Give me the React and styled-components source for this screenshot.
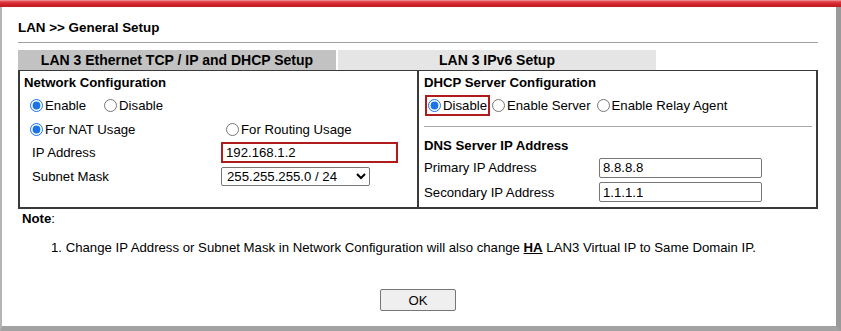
import styled, { createGlobalStyle } from "styled-components";

const GlobalStyle = createGlobalStyle`
  body {
    margin: 0;
    font-family: "Liberation Sans", Arial, sans-serif;
    font-size: 13.2px;
    color: #000;
    background: #fff;
  }
`;

const Window = styled.div`
  width: 841px;
  height: 331px;
  display: flex;
  flex-direction: column;
  box-sizing: border-box;
`;

const TopBar = styled.div`
  height: 7px;
  background: linear-gradient(#f3a0a0 0, #e04048 25%, #d0222a 60%, #c41c24 100%);
`;

const Body = styled.div`
  flex: 1;
  box-sizing: border-box;
  border-left: 2px solid #b4b4b4;
  border-right: 5px solid #9a9a9a;
  border-bottom: 5px solid #a2a2a2;
  padding: 13px 18px 0 16px;
  display: flex;
  flex-direction: column;
`;

const Title = styled.div`
  height: 16px;
  line-height: 16px;
  font-weight: bold;
  font-size: 13.4px;
`;

const Rule = styled.div`
  margin-top: 6px;
  height: 1px;
  background: #a0a0a0;
`;

const Tabs = styled.div`
  margin-top: 7px;
  display: flex;
  gap: 2px;
`;

const Tab = styled.div`
  width: 318px;
  height: 20px;
  line-height: 20px;
  text-align: center;
  font-weight: bold;
  font-size: 14px;
  background: ${(p) => (p.$active ? "#c2c2c2" : "#e5e5e5")};
`;

const Panel = styled.div`
  display: grid;
  grid-template-columns: 399px 1fr;
  border: 2px solid #3a3a3a;
  border-top-width: 1px;
  height: 139px;
  box-sizing: border-box;
`;

const Cell = styled.div`
  display: grid;
  grid-template-rows: ${(p) => p.$rows};
  grid-template-columns: ${(p) => p.$cols};
  align-content: start;
  padding-left: ${(p) => p.$pad}px;
  border-right: ${(p) => (p.$divider ? "2px solid #3a3a3a" : "none")};
`;

const Heading = styled.div`
  grid-column: 1 / -1;
  display: flex;
  align-items: center;
  font-weight: bold;
`;

const Row = styled.div`
  display: flex;
  align-items: center;
  grid-column: ${(p) => (p.$span ? "1 / -1" : "auto")};
  padding-left: ${(p) => p.$indent || 0}px;
`;

const Radio = styled.input.attrs({ type: "radio" })`
  width: 13px;
  height: 13px;
  margin: 0 2px 0 ${(p) => p.$ml ?? 6}px;
  accent-color: #1a73e8;
`;

const Choice = styled.label`
  display: flex;
  align-items: center;
  margin-right: ${(p) => p.$mr || 0}px;
`;

const Highlight = styled.label`
  display: flex;
  align-items: center;
  height: 21px;
  box-sizing: border-box;
  margin-left: 1px;
  padding-right: 1px;
  border: 2px solid #b01c1c;
`;

const TextInput = styled.input`
  box-sizing: border-box;
  width: ${(p) => p.$w}px;
  height: ${(p) => p.$h}px;
  padding: 0 3px;
  font: 13.2px "Liberation Sans", Arial, sans-serif;
  color: #000;
  border: ${(p) => (p.$alert ? "2px solid #b01c1c" : "1px solid #767676")};
  border-radius: ${(p) => (p.$alert ? 0 : 2)}px;
  outline: none;
`;

const Select = styled.select`
  box-sizing: border-box;
  width: 149px;
  height: 19px;
  padding: 0 1px;
  font: 13.2px "Liberation Sans", Arial, sans-serif;
  color: #000;
  border: 1px solid #767676;
  border-radius: 2px;
  background: #fff;
`;

const Divider = styled.div`
  grid-column: 1 / -1;
  align-self: center;
  height: 1px;
  margin-right: 4px;
  background: #a8a8a8;
`;

const Note = styled.div`
  margin-top: 2px;
  padding-left: 4px;
  height: 16px;
  line-height: 16px;
  b {
    font-weight: bold;
  }
`;

const NoteItem = styled.div`
  margin-top: 13px;
  padding-left: 33px;
  height: 16px;
  line-height: 16px;
  u {
    font-weight: bold;
  }
`;

const Actions = styled.div`
  margin-top: 33px;
  display: flex;
  justify-content: center;
`;

const Button = styled.button`
  width: 76px;
  height: 22px;
  font: 13.2px "Liberation Sans", Arial, sans-serif;
  color: #000;
  background: #efefef;
  border: 1px solid #767676;
  border-radius: 2px;
`;

export default function App() {
  return (
    <>
      <GlobalStyle />
      <Window>
        <TopBar />
        <Body>
          <Title>LAN &gt;&gt; General Setup</Title>
          <Rule />
          <Tabs>
            <Tab $active>LAN 3 Ethernet TCP / IP and DHCP Setup</Tab>
            <Tab>LAN 3 IPv6 Setup</Tab>
          </Tabs>
          <Panel>
            <Cell $rows="22px 24px 24px 23px 24px" $cols="197px 1fr" $pad={4} $divider>
              <Heading>Network Configuration</Heading>
              <Row $span>
                <Choice $mr={18}>
                  <Radio name="lan" defaultChecked />
                  Enable
                </Choice>
                <Choice>
                  <Radio name="lan" $ml={0} />
                  Disable
                </Choice>
              </Row>
              <Row>
                <Choice>
                  <Radio name="mode" defaultChecked />
                  For NAT Usage
                </Choice>
              </Row>
              <Row>
                <Choice>
                  <Radio name="mode" $ml={5} />
                  For Routing Usage
                </Choice>
              </Row>
              <Row $indent={8}>IP Address</Row>
              <Row>
                <TextInput $w={177} $h={21} $alert defaultValue="192.168.1.2" />
              </Row>
              <Row $indent={8}>Subnet Mask</Row>
              <Row>
                <Select defaultValue="24">
                  <option value="24">255.255.255.0 / 24</option>
                </Select>
              </Row>
            </Cell>
            <Cell $rows="22px 24px 18px 20px 25px 24px" $cols="175px 1fr" $pad={5}>
              <Heading>DHCP Server Configuration</Heading>
              <Row $span>
                <Highlight>
                  <Radio name="dhcp" $ml={1} defaultChecked />
                  Disable
                </Highlight>
                <Choice $mr={4}>
                  <Radio name="dhcp" $ml={2} />
                  Enable Server
                </Choice>
                <Choice>
                  <Radio name="dhcp" $ml={2} />
                  Enable Relay Agent
                </Choice>
              </Row>
              <Divider />
              <Heading>DNS Server IP Address</Heading>
              <Row>Primary IP Address</Row>
              <Row>
                <TextInput $w={163} $h={20} defaultValue="8.8.8.8" />
              </Row>
              <Row>Secondary IP Address</Row>
              <Row>
                <TextInput $w={163} $h={20} defaultValue="1.1.1.1" />
              </Row>
            </Cell>
          </Panel>
          <Note>
            <b>Note</b>:
          </Note>
          <NoteItem>
            1. Change IP Address or Subnet Mask in Network Configuration will also change{" "}
            <u>HA</u> LAN3 Virtual IP to Same Domain IP.
          </NoteItem>
          <Actions>
            <Button>OK</Button>
          </Actions>
        </Body>
      </Window>
    </>
  );
}
